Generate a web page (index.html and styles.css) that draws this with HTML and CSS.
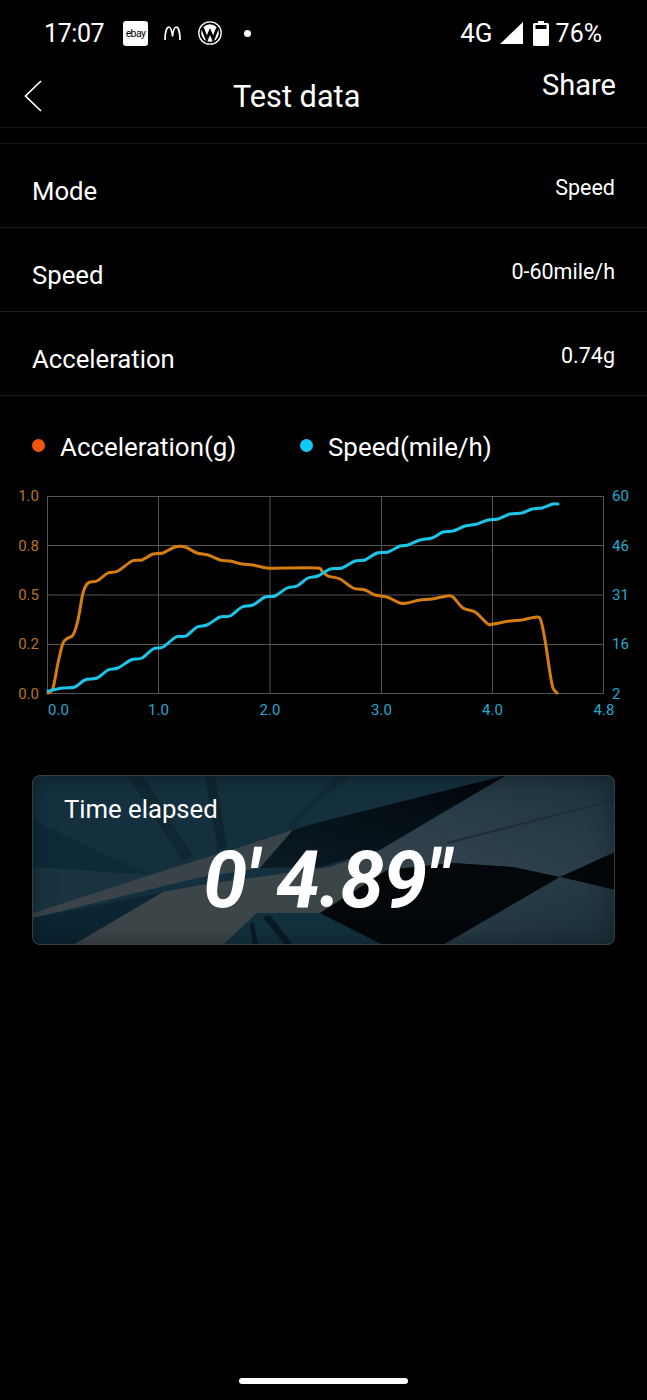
FILE: index.html
```html
<html>
<head>
  <title>Test data</title>
  <link rel="stylesheet" href="styles.css">
</head>
<body>
  <div class="page">
    <!-- Status bar -->
    <div class="status-bar">
      <span class="time">17:07</span>
      <span class="ebay-icon">ebay</span>
      <svg class="m-icon" width="17" height="14" viewBox="0 0 17 14">
        <path d="M1 14C1 5 3 1 4.800 1C7 1 8 6 8.500 10.500C9 6 10 1 12.200 1C14 1 16 5 16 14" fill="none" stroke="#fff" stroke-width="1.700"/>
      </svg>
      <svg class="w-icon" width="24" height="24" viewBox="0 0 24 24">
        <circle cx="12" cy="12" r="11.200" fill="none" stroke="#fff" stroke-width="1.300"/>
        <circle cx="12" cy="12" r="8.800" fill="#fff"/>
        <path d="M4.500 7L8.800 18L12 10.500L15.200 18L19.500 7" fill="none" stroke="#000" stroke-width="2.800"/>
      </svg>
      <span class="dot"></span>
      <span class="status-right">
        <span class="network">4G</span>
        <svg class="signal" width="23" height="22" viewBox="0 0 23 22">
          <path d="M23 0V22H0Z" fill="#fff"/>
        </svg>
        <svg class="battery" width="16" height="25" viewBox="0 0 16 25">
          <path d="M5 0H11V2H14.500Q16 2 16 3.500V23.500Q16 25 14.500 25H1.500Q0 25 0 23.500V3.500Q0 2 1.500 2H5Z" fill="#fff"/>
          <rect x="2.500" y="4" width="11" height="4" fill="#000"/>
        </svg>
        <span class="percent">76%</span>
      </span>
    </div>

    <!-- Title bar -->
    <div class="nav-bar">
      <svg class="back" width="18" height="32" viewBox="0 0 18 32">
        <path d="M17 1L1.500 16L17 31" fill="none" stroke="#fff" stroke-width="1.700"/>
      </svg>
      <span class="nav-title">Test data</span>
      <span class="nav-share">Share</span>
    </div>
    <div class="spacer-row"></div>

    <!-- Test settings -->
    <div class="row">
      <span class="row-label">Mode</span>
      <span class="row-value">Speed</span>
    </div>
    <div class="row">
      <span class="row-label">Speed</span>
      <span class="row-value">0-60mile/h</span>
    </div>
    <div class="row">
      <span class="row-label">Acceleration</span>
      <span class="row-value">0.74g</span>
    </div>

    <!-- Chart legend -->
    <div class="legend">
      <span class="legend-item legend-item-accel"><i class="legend-dot dot-accel"></i>Acceleration(g)</span>
      <span class="legend-item"><i class="legend-dot dot-speed"></i>Speed(mile/h)</span>
    </div>

    <!-- Chart, curves are filled in by chart.js -->
    <svg class="chart" width="647" height="240" viewBox="0 480 647 240">
      <g class="grid">
        <path d="M47 496.500H604M47 545.500H604M47 595H604M47 644.500H604M47 693.500H604"/>
        <path d="M47.500 496V694M158.500 496V694M270 496V694M381.500 496V694M492.500 496V694M603.500 496V694"/>
      </g>
      <g class="axis-left">
        <text x="39" y="501">1.0</text>
        <text x="39" y="551">0.8</text>
        <text x="39" y="600">0.5</text>
        <text x="39" y="649">0.2</text>
        <text x="39" y="699">0.0</text>
      </g>
      <g class="axis-right">
        <text x="612" y="501">60</text>
        <text x="612" y="551">46</text>
        <text x="612" y="600">31</text>
        <text x="612" y="649">16</text>
        <text x="612" y="699">2</text>
      </g>
      <g class="axis-bottom">
        <text x="58.500" y="715">0.0</text>
        <text x="158.500" y="715">1.0</text>
        <text x="270" y="715">2.0</text>
        <text x="381.500" y="715">3.0</text>
        <text x="492.500" y="715">4.0</text>
        <text x="604" y="715">4.8</text>
      </g>
      <path id="accelLine" class="line line-accel"/>
      <path id="speedLine" class="line line-speed"/>
    </svg>

    <!-- Elapsed time card -->
    <div class="time-card">
      <svg class="card-bg" viewBox="32 775 583 170" preserveAspectRatio="none">
        <defs>
          <linearGradient id="slate" x1="0" y1="1" x2="1" y2="0">
            <stop offset="0" stop-color="#3a4549"/>
            <stop offset="0.45" stop-color="#2b3f4b"/>
            <stop offset="1" stop-color="#1b323e"/>
          </linearGradient>
          <linearGradient id="slateLow" x1="0" y1="0" x2="1" y2="1">
            <stop offset="0" stop-color="#2c414d"/>
            <stop offset="1" stop-color="#1b2f39"/>
          </linearGradient>
          <linearGradient id="wedge" x1="0" y1="1" x2="1" y2="0">
            <stop offset="0" stop-color="#0a1a24"/>
            <stop offset="1" stop-color="#02060a"/>
          </linearGradient>
        </defs>
        <rect x="32" y="775" width="583" height="170" fill="#14303e"/>
        <!-- top left -->
        <polygon points="32,820 150,875 32,867" fill="#0d2a38"/>
        <polygon points="32,867 150,875 33,913" fill="#193440"/>
        <polygon points="127,775 143,775 193,857 182,860" fill="#0f2834"/>
        <polygon points="205,775 215,775 227,848 218,850" fill="#0e2530"/>
        <polygon points="337,775 353,775 313,805 293,830 285,828" fill="#102a37"/>
        <!-- grey stripes -->
        <polygon points="33,913 150,875 237,848 293,830 260,868 197,878 33,918" fill="#3a4347"/>
        <polygon points="33,918 163,892 73,945 32,945" fill="#0b2533"/>
        <polygon points="73,945 163,892 200,885 330,867 380,850 400,880 320,913 257,913 223,945" fill="#3c4548"/>
        <!-- bottom spokes -->
        <polygon points="257,913 320,913 383,945 223,945" fill="#12303e"/>
        <polygon points="250,923 254,923 258,945 253,945" fill="#081b25"/>
        <polygon points="263,917 270,915 293,945 285,945" fill="#081b25"/>
        <!-- dark wedge -->
        <polygon points="507,775 380,850 320,867 260,868 293,830 320,822" fill="url(#wedge)"/>
        <!-- right side -->
        <polygon points="507,775 615,775 615,852 560,877 513,867 453,863 387,870 340,885 380,850" fill="url(#slate)"/>
        <polygon points="447,842 613,800 613,801 447,844" fill="#1a2c37"/>
        <polygon points="320,913 387,870 453,863 513,867 560,877 443,945 383,945" fill="#03070a"/>
        <polygon points="560,877 615,852 615,890" fill="#03070a"/>
        <polygon points="560,877 615,890 615,945 443,945" fill="url(#slateLow)"/>
      </svg>
      <span class="card-label">Time elapsed</span>
      <span class="card-time">0' 4.89"</span>
    </div>

    <div class="home-indicator"></div>
  </div>
  <script src="chart.js"></script>
</body>
</html>
```

FILE: styles.css
```css
/* Dark test result page */
body {
  margin: 0;
  background-color: #000;
  color: #fff;
  font-family: Roboto, "Liberation Sans", sans-serif;
}
.page {
  display: flex;
  flex-direction: column;
  width: 647px;
  height: 1400px;
  overflow: hidden;
}

/* Status bar */
.status-bar {
  display: flex;
  align-items: center;
  height: 66px;
  padding: 0 45px 0 44px;
  box-sizing: border-box;
  font-size: 25px;
}
.time {
  width: 60px;
  margin-right: 19px;
  letter-spacing: -0.4px;
}
.ebay-icon {
  width: 25px;
  height: 25px;
  border-radius: 3px;
  background-color: #fff;
  color: #000;
  font-size: 10.500px;
  line-height: 25px;
  text-align: center;
  letter-spacing: -0.6px;
}
.m-icon {
  margin-left: 16px;
}
.w-icon {
  margin-left: 17px;
}
.dot {
  width: 7px;
  height: 7px;
  margin-left: 22px;
  border-radius: 50%;
  background-color: #fff;
}
.status-right {
  display: flex;
  align-items: center;
  margin-left: auto;
}
.network {
  font-size: 26px;
}
.signal {
  margin-left: 7px;
}
.battery {
  margin-left: 10px;
}
.percent {
  margin-left: 7px;
}

/* Title bar */
.nav-bar {
  display: flex;
  align-items: flex-start;
  height: 61px;
  padding: 0 31px 0 24px;
  border-bottom: 1px solid #141414;
}
.back {
  margin-top: 14px;
}
.nav-title {
  margin: 12px 0 0 191px;
  font-size: 30.700px;
  line-height: 38px;
}
.nav-share {
  margin-left: auto;
  font-size: 29px;
  line-height: 38px;
}
.spacer-row {
  height: 15px;
  border-bottom: 1px solid #141414;
}

/* Settings rows */
.row {
  display: flex;
  justify-content: space-between;
  height: 83px;
  padding: 0 32px;
  border-bottom: 1px solid #1c1c1c;
}
.row-label {
  margin-top: 30px;
  font-size: 25.700px;
  line-height: 34px;
}
.row-value {
  margin-top: 30px;
  font-size: 21.500px;
  line-height: 28px;
}

/* Legend */
.legend {
  display: flex;
  height: 84px;
  padding: 18px 0 0 32px;
  box-sizing: border-box;
  align-items: center;
  font-size: 25.900px;
}
.legend-item {
  display: flex;
  align-items: center;
}
.legend-item-accel {
  width: 268px;
}
.legend-dot {
  width: 13px;
  height: 13px;
  margin: 0 15px 4px 0;
  border-radius: 50%;
}
.dot-accel {
  background-color: #f0560f;
}
.dot-speed {
  background-color: #12c8f5;
}

/* Chart */
.chart {
  display: block;
  font-size: 15px;
}
.grid path {
  fill: none;
  stroke: #555;
  stroke-width: 1;
}
.axis-left text {
  fill: #b9741f;
  text-anchor: end;
}
.axis-right text {
  fill: #22a9cf;
}
.axis-bottom text {
  fill: #22a9cf;
  text-anchor: middle;
}
.line {
  fill: none;
  stroke-width: 3;
  stroke-linecap: round;
  stroke-linejoin: round;
}
.line-accel {
  stroke: #d67d10;
}
.line-speed {
  stroke: #1cc4e8;
}

/* Elapsed time card */
.time-card {
  position: relative;
  display: flex;
  flex-direction: column;
  width: 583px;
  height: 170px;
  margin: 55px 0 0 32px;
  box-sizing: border-box;
  border-radius: 8px;
  overflow: hidden;
}
.card-bg {
  position: absolute;
  top: 0;
  left: 0;
  width: 100%;
  height: 100%;
}
.time-card::after {
  content: "";
  position: absolute;
  top: 0;
  left: 0;
  right: 0;
  bottom: 0;
  border: 1px solid #343e43;
  border-radius: 8px;
  box-shadow: inset 0 0 22px rgba(0, 0, 0, 0.35);
}
.card-label {
  position: relative;
  margin: 19px 0 0 32px;
  font-size: 25.700px;
  line-height: 30px;
}
.card-time {
  position: relative;
  z-index: 1;
  margin-top: 16px;
  padding-left: 6px;
  font-size: 79px;
  font-weight: 700;
  font-style: italic;
  line-height: 80px;
  letter-spacing: -1px;
  text-align: center;
}

/* Home indicator */
.home-indicator {
  width: 169px;
  height: 6px;
  margin: auto 0 16px 239px;
  border-radius: 3px;
  background-color: #fff;
}
```

FILE: chart.js
```js
// Points of each curve, in the coordinates of the chart svg
const accelPoints = [
  [48, 693], [53, 688], [58, 663], [63, 643], [68, 638], [73, 635], [78, 620], [83, 593], [88, 583],
  [97, 581], [108, 573], [118, 571], [132, 561], [142, 560], [153, 554], [163, 553], [175, 547],
  [185, 547], [197, 553], [208, 555], [220, 560], [230, 561], [242, 564], [253, 565], [267, 568],
  [283, 568], [317, 568], [322, 571], [328, 576], [340, 579], [353, 588], [365, 590], [375, 595],
  [387, 597], [400, 603], [407, 603], [420, 600], [432, 599], [447, 596], [453, 597], [463, 608],
  [475, 612], [488, 624], [493, 624], [510, 621], [522, 620], [537, 617], [541, 621], [545, 640],
  [550, 673], [553, 688], [557, 693]
];
const speedPoints = [
  [48, 691], [63, 688], [75, 687], [85, 680], [97, 678], [108, 670], [118, 668], [131, 660], [142, 658],
  [153, 649], [163, 647], [176, 637], [186, 636], [197, 627], [207, 625], [220, 617], [230, 616],
  [242, 607], [253, 605], [265, 597], [275, 596], [287, 588], [297, 586], [308, 578], [318, 576],
  [330, 569], [342, 568], [355, 561], [365, 560], [377, 553], [388, 552], [400, 546], [408, 545],
  [420, 540], [432, 538], [443, 532], [453, 531], [465, 526], [477, 524], [488, 520], [498, 519],
  [510, 514], [522, 513], [532, 509], [542, 508], [553, 504], [558, 504]
];

// Turn the points into a smooth path
function smoothPath(points) {
  let d = 'M' + points[0][0] + ' ' + points[0][1];
  for (let i = 0; i < points.length - 1; i++) {
    const p0 = points[Math.max(i - 1, 0)];
    const p1 = points[i];
    const p2 = points[i + 1];
    const p3 = points[Math.min(i + 2, points.length - 1)];
    const c1x = p1[0] + (p2[0] - p0[0]) / 6;
    const c1y = p1[1] + (p2[1] - p0[1]) / 6;
    const c2x = p2[0] - (p3[0] - p1[0]) / 6;
    const c2y = p2[1] - (p3[1] - p1[1]) / 6;
    d += 'C' + c1x + ' ' + c1y + ' ' + c2x + ' ' + c2y + ' ' + p2[0] + ' ' + p2[1];
  }
  return d;
}

document.getElementById('accelLine').setAttribute('d', smoothPath(accelPoints));
document.getElementById('speedLine').setAttribute('d', smoothPath(speedPoints));
```
